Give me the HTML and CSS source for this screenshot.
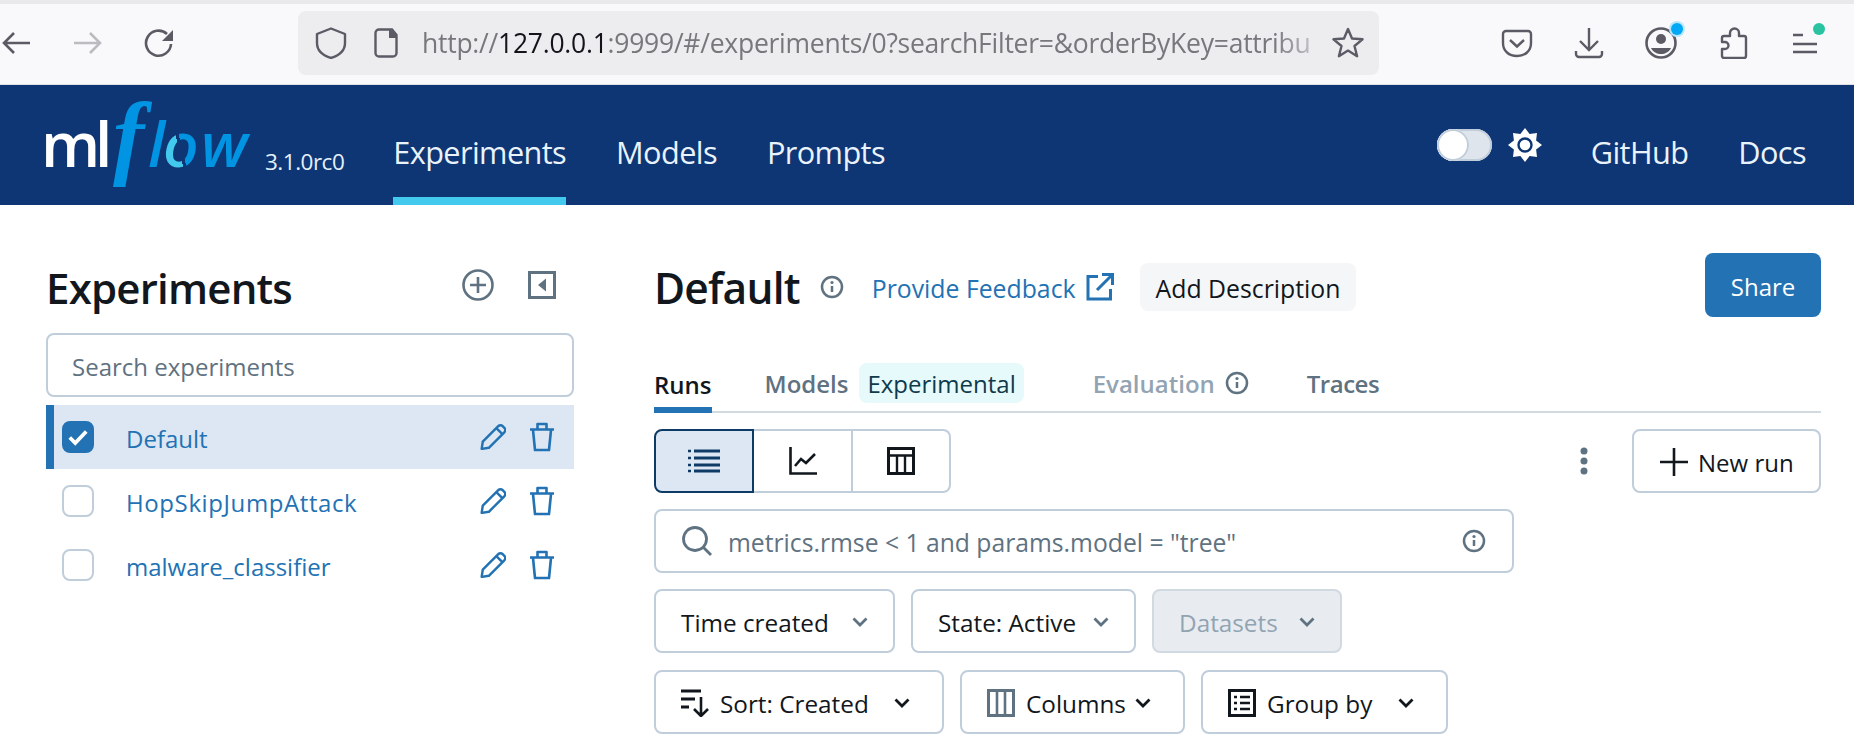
FILE: index.html
```html
<!DOCTYPE html>
<html lang="en">
<head>
  <meta charset="UTF-8">
  <title>MLflow</title>
  <link rel="stylesheet" href="styles.css">
</head>
<body>
  <svg class="sprites" aria-hidden="true">
    <symbol id="pencil" viewBox="1 1 23.500 23.500">
      <path d="M2.500 23.500l1-6.500L17.500 3a2.800 2.800 0 0 1 4 0l1.500 1.500a2.800 2.800 0 0 1 0 4L9 22.500z" fill="none" stroke="currentColor" stroke-width="2.200" stroke-linejoin="round"/>
      <path d="M16 5l5 5" stroke="currentColor" stroke-width="2.200"/>
    </symbol>
    <symbol id="trash" viewBox="0 0 26 30">
      <path d="M1 7.500h24M8.500 7V2h9v5M4 8l2 20h14l2-20" fill="none" stroke="currentColor" stroke-width="2.600" stroke-linejoin="round"/>
    </symbol>
    <symbol id="info" viewBox="0 0 24 24">
      <circle cx="12" cy="12" r="10" fill="none" stroke="currentColor" stroke-width="2.500"/>
      <path d="M12 11v6" stroke="currentColor" stroke-width="2.500"/>
      <circle cx="12" cy="7.500" r="1.600" fill="currentColor"/>
    </symbol>
    <symbol id="chevron" viewBox="0 0 16 10">
      <path d="M1.500 1.500L8 8l6.500-6.500" fill="none" stroke="currentColor" stroke-width="2.800"/>
    </symbol>
  </svg>

  <header class="browser">
    <div class="tab-strip"></div>
    <div class="toolbar">
      <svg class="tool" viewBox="0 0 32 32"><path d="M30 16H4M14 6L4 16l10 10" fill="none" stroke="#5b5b66" stroke-width="2.600"/></svg>
      <svg class="tool" viewBox="0 0 32 32"><path d="M2 16h26M18 6l10 10-10 10" fill="none" stroke="#bcbcc0" stroke-width="2.600"/></svg>
      <svg class="tool" viewBox="0 0 32 32"><path d="M27 17a12.500 12.500 0 1 1-4-10" fill="none" stroke="#5b5b66" stroke-width="2.600"/><path d="M29 3v11H18z" fill="#5b5b66"/></svg>
      <div class="urlbar">
        <svg class="tool-sm" viewBox="0 0 32 32"><path d="M16 1.500L30 7v9c0 8-6 12.500-14 15C8 28.500 2 24 2 16V7z" fill="none" stroke="#5b5b66" stroke-width="2.400" stroke-linejoin="round"/></svg>
        <svg class="tool-doc" viewBox="0 0 24 30"><path d="M18 1.500H5a3.500 3.500 0 0 0-3.500 3.500v20A3.500 3.500 0 0 0 5 28.500h14a3.500 3.500 0 0 0 3.500-3.500V7z" fill="none" stroke="#5b5b66" stroke-width="2.400"/><path d="M15 1v9h8V6z" fill="#5b5b66"/></svg>
        <div class="url">http://<b>127.0.0.1</b>:9999/#/experiments/0?searchFilter=&amp;orderByKey=attribu</div>
        <svg class="tool-sm" viewBox="0 0 32 32"><path d="M16 2l4 9.500 10.500.8-8 6.700 2.600 10.200L16 23.600 6.900 29.200 9.500 19l-8-6.700L12 11.500z" fill="none" stroke="#5b5b66" stroke-width="2.400" stroke-linejoin="round"/></svg>
      </div>
      <div class="browser-actions">
        <svg class="tool" viewBox="0 0 32 32"><path d="M5 4h22a3 3 0 0 1 3 3v9c0 8-6 13-14 13S2 24 2 16V7a3 3 0 0 1 3-3z" fill="none" stroke="#5b5b66" stroke-width="2.400"/><path d="M9 13l7 6.500 7-6.500" fill="none" stroke="#5b5b66" stroke-width="2.400"/></svg>
        <svg class="tool" viewBox="0 0 32 32"><path d="M16 1v22M7 14l9 9 9-9M3 24v3a3 3 0 0 0 3 3h20a3 3 0 0 0 3-3v-3" fill="none" stroke="#5b5b66" stroke-width="2.400"/></svg>
        <div class="tool-wrap">
          <svg class="tool" viewBox="0 0 32 32"><circle cx="16" cy="16" r="14.500" fill="none" stroke="#5b5b66" stroke-width="2.600"/><circle cx="16" cy="12" r="5" fill="#5b5b66"/><path d="M6 21h20c-2 4-6 6-10 6s-8-2-10-6z" fill="#5b5b66"/></svg>
          <span class="badge badge-blue"></span>
        </div>
        <svg class="tool" viewBox="0 0 32 32"><path d="M13 9V6a4.500 4.500 0 0 1 9 0v3h5a2 2 0 0 1 2 2v18a2 2 0 0 1-2 2H7a2 2 0 0 1-2-2v-7h3a3.500 3.500 0 0 0 0-7H5v-4a2 2 0 0 1 2-2z" fill="none" stroke="#5b5b66" stroke-width="2.400" stroke-linejoin="round"/></svg>
        <div class="tool-wrap">
          <svg class="tool" viewBox="0 0 32 32"><path d="M4 8h10M4 17h24M4 25h24" stroke="#5b5b66" stroke-width="2.600"/></svg>
          <span class="badge badge-green"></span>
        </div>
      </div>
    </div>
  </header>

  <nav class="topnav">
    <svg class="logo" viewBox="0 0 212 100" role="img">
      <defs>
        <linearGradient id="ring" gradientUnits="userSpaceOnUse" x1="120" y1="60" x2="153" y2="52">
          <stop offset="0.44" stop-color="#43c9ed"/>
          <stop offset="0.44" stop-color="#0e3574"/>
          <stop offset="0.53" stop-color="#0e3574"/>
          <stop offset="0.53" stop-color="#0194e2"/>
        </linearGradient>
      </defs>
      <text class="logo-flow" y="72"><tspan class="logo-ml" x="-4 50">ml</tspan><tspan class="logo-f" x="68">f</tspan><tspan x="103">l</tspan><tspan x="118" fill="url(#ring)">o</tspan><tspan x="156">w</tspan></text>
    </svg>
    <span class="version">3.1.0rc0</span>
    <div class="navlinks">
      <a class="navlink active">Experiments</a>
      <a class="navlink">Models</a>
      <a class="navlink">Prompts</a>
    </div>
    <div class="navright">
      <span class="toggle"><span class="knob"></span></span>
      <svg class="sun" viewBox="0 0 34 34"><path d="M17 0l4.600 5.900L29 5l-.9 7.400L34 17l-5.900 4.600L29 29l-7.400-.9L17 34l-4.600-5.900L5 29l.9-7.400L0 17l5.900-4.600L5 5l7.400.9z" fill="#fff"/><circle cx="17" cy="17" r="6.500" fill="#fff" stroke="#0e3574" stroke-width="2.400"/></svg>
      <a class="navlink plain">GitHub</a>
      <a class="navlink plain">Docs</a>
    </div>
  </nav>

  <main class="page">
    <aside class="sidebar">
      <div class="side-head">
        <h1>Experiments</h1>
        <svg class="head-plus" viewBox="0 0 32 32"><circle cx="16" cy="16" r="14.500" fill="none" stroke="#5f7281" stroke-width="2.600"/><path d="M16 8v16M8 16h16" stroke="#5f7281" stroke-width="2.600"/></svg>
        <svg class="head-collapse" viewBox="0 0 28 28"><rect x="1.500" y="1.500" width="25" height="25" fill="none" stroke="#5f7281" stroke-width="3"/><path d="M18 7.500v13L10 14z" fill="#5f7281"/></svg>
      </div>
      <div class="side-search">Search experiments</div>
      <ul class="exp-list">
        <li class="exp selected">
          <span class="check on"><svg viewBox="0 0 20 20"><path d="M2.500 10.500l5 5 10-10.500" fill="none" stroke="#fff" stroke-width="3.400"/></svg></span>
          <a class="exp-name">Default</a>
          <svg class="act-pencil"><use href="#pencil"/></svg>
          <svg class="act-trash"><use href="#trash"/></svg>
        </li>
        <li class="exp">
          <span class="check"></span>
          <a class="exp-name wide">HopSkipJumpAttack</a>
          <svg class="act-pencil"><use href="#pencil"/></svg>
          <svg class="act-trash"><use href="#trash"/></svg>
        </li>
        <li class="exp">
          <span class="check"></span>
          <a class="exp-name">malware_classifier</a>
          <svg class="act-pencil"><use href="#pencil"/></svg>
          <svg class="act-trash"><use href="#trash"/></svg>
        </li>
      </ul>
    </aside>

    <section class="content">
      <div class="title-row">
        <h2>Default</h2>
        <svg class="title-info"><use href="#info"/></svg>
        <a class="feedback">Provide Feedback</a>
        <svg class="ext" viewBox="0 0 28 28"><path d="M12 3.500H2v22.500h22.500V16" fill="none" stroke="#2272b4" stroke-width="3"/><path d="M11 17L25 3M16 1.500h10.500V12" fill="none" stroke="#2272b4" stroke-width="3"/></svg>
        <span class="add-desc">Add Description</span>
        <button class="share">Share</button>
      </div>

      <div class="tabs">
        <span class="tab current">Runs</span>
        <span class="tab">Models</span>
        <span class="exp-tag">Experimental</span>
        <span class="tab faded">Evaluation</span>
        <svg class="tab-info"><use href="#info"/></svg>
        <span class="tab last">Traces</span>
      </div>

      <div class="view-row">
        <div class="segments">
          <span class="seg active">
            <svg class="seg-icon" viewBox="0 0 32 24"><path d="M6 2h26M6 9h26M6 16h26M6 22h26" stroke="#0e3a66" stroke-width="3"/><path d="M0 2h3M0 9h3M0 16h3M0 22h3" stroke="#0e3a66" stroke-width="2.500"/></svg>
          </span>
          <span class="seg">
            <svg class="seg-icon tall" viewBox="0 0 28 28"><path d="M1.500 0v26.500H28" fill="none" stroke="#11171c" stroke-width="2.600"/><path d="M6 19l6-7 5 4 9-9" fill="none" stroke="#11171c" stroke-width="2.600"/></svg>
          </span>
          <span class="seg">
            <svg class="seg-icon tall" viewBox="0 0 28 28"><rect x="1.500" y="1.500" width="25" height="25" fill="none" stroke="#11171c" stroke-width="3"/><path d="M1 8.500h26M10 8v19M18 8v19" stroke="#11171c" stroke-width="2.400"/></svg>
          </span>
        </div>
        <svg class="kebab" viewBox="0 0 8 28"><circle cx="4" cy="4" r="3.500" fill="#5f7281"/><circle cx="4" cy="14" r="3.500" fill="#5f7281"/><circle cx="4" cy="24" r="3.500" fill="#5f7281"/></svg>
        <button class="new-run"><svg viewBox="0 0 28 28"><path d="M14 0v28M0 14h28" stroke="#11171c" stroke-width="2.600"/></svg>New run</button>
      </div>

      <div class="run-search">
        <svg class="glass" viewBox="0 0 32 32"><circle cx="14" cy="14" r="11.500" fill="none" stroke="#5f7281" stroke-width="2.800"/><path d="M22.500 22.500L30 30" stroke="#5f7281" stroke-width="2.800"/></svg>
        <span class="run-query">metrics.rmse &lt; 1 and params.model = "tree"</span>
        <svg class="run-info"><use href="#info"/></svg>
      </div>

      <div class="filter-row">
        <button class="pick w-time">Time created<svg class="chev muted"><use href="#chevron"/></svg></button>
        <button class="pick w-state">State: Active<svg class="chev muted"><use href="#chevron"/></svg></button>
        <button class="pick w-data disabled">Datasets<svg class="chev muted"><use href="#chevron"/></svg></button>
      </div>

      <div class="filter-row tools">
        <button class="pick w-sort">
          <svg class="pick-icon" viewBox="0 0 28 28"><path d="M0 2h20M0 10h14M0 18h8" stroke="#11171c" stroke-width="3"/><path d="M20 8v19M13 20l7 7 7-7" fill="none" stroke="#11171c" stroke-width="2.600"/></svg>
          <span class="pick-label">Sort: Created</span><svg class="chev"><use href="#chevron"/></svg>
        </button>
        <button class="pick w-cols">
          <svg class="pick-icon" viewBox="0 0 28 28"><rect x="1.500" y="1.500" width="25" height="25" fill="none" stroke="#5f7281" stroke-width="3"/><path d="M10 1v26M18 1v26" stroke="#5f7281" stroke-width="2.600"/></svg>
          <span class="pick-label">Columns</span><svg class="chev"><use href="#chevron"/></svg>
        </button>
        <button class="pick w-group">
          <svg class="pick-icon" viewBox="0 0 28 28"><rect x="1.500" y="1.500" width="25" height="25" fill="none" stroke="#11171c" stroke-width="3"/><path d="M6 8h3M12 8h10M6 14h3M12 14h10M6 20h3M12 20h10" stroke="#11171c" stroke-width="2.400"/></svg>
          <span class="pick-label">Group by</span><svg class="chev"><use href="#chevron"/></svg>
        </button>
      </div>
    </section>
  </main>
</body>
</html>
```

FILE: styles.css
```css
* {
  box-sizing: border-box;
}
html, body {
  margin: 0;
  height: 742px;
  overflow: hidden;
  background: #fff;
}
body {
  font-family: "Open Sans", "Noto Sans", sans-serif;
  font-size: 24px;
  color: #11171c;
}
button {
  font: inherit;
  color: inherit;
}
.sprites {
  display: none;
}

/* browser chrome */
.tab-strip {
  height: 4px;
  background: #e9e9ec;
}
.toolbar {
  height: 81px;
  display: flex;
  align-items: center;
  gap: 40px;
  padding-bottom: 2px;
  background: #f9f9fb;
  border-bottom: 1px solid #e0e0e4;
}
.tool {
  display: block;
  width: 32px;
  height: 32px;
}
.urlbar {
  width: 1081px;
  height: 64px;
  margin-left: 82px;
  padding: 0 15px 0 17px;
  display: flex;
  align-items: center;
  border-radius: 8px;
  background: #ededf0;
}
.tool-sm {
  flex: none;
  width: 32px;
  height: 32px;
}
.tool-doc {
  flex: none;
  width: 24px;
  height: 30px;
  margin-left: 27px;
}
.url {
  flex: 1;
  margin: 0 13px 0 24px;
  overflow: hidden;
  white-space: nowrap;
  font-size: 26.500px;
  color: #77777c;
  letter-spacing: -0.25px;
  -webkit-mask-image: linear-gradient(to right, #000 95%, rgba(0,0,0,.25));
  mask-image: linear-gradient(to right, #000 95%, rgba(0,0,0,.25));
}
.url b {
  font-weight: 400;
  color: #15141a;
}
.browser-actions {
  display: flex;
  gap: 40px;
  margin-left: 82px;
}
.tool-wrap {
  position: relative;
}
.badge {
  position: absolute;
  width: 12px;
  height: 12px;
  border-radius: 50%;
}
.badge-blue {
  top: -4px;
  right: -6px;
  background: #00a8f5;
  box-shadow: 0 0 0 2px #b9e6fb;
}
.badge-green {
  top: -4px;
  right: -4px;
  background: #2ac3a2;
}

/* top nav */
.topnav {
  height: 120px;
  padding-left: 45px;
  display: flex;
  align-items: center;
  background: #0e3574;
  color: #fff;
}
.logo {
  flex: none;
  width: 212px;
  height: 100px;
  overflow: visible;
}
.logo-flow {
  font-family: "Open Sans", sans-serif;
  font-style: italic;
  font-weight: 600;
  font-size: 62px;
  fill: #0194e2;
}
.logo-ml {
  font-style: normal;
  font-weight: 600;
  fill: #fff;
}
.logo-f {
  font-family: "Liberation Serif", serif;
  font-weight: 700;
  font-size: 94px;
}
.version {
  margin: 32px 0 0 8px;
  font-size: 22.500px;
  letter-spacing: -0.5px;
  color: #e4f0fa;
}
.navlinks {
  height: 100%;
  margin-left: 49px;
  display: flex;
  gap: 50px;
}
.navlink {
  display: flex;
  align-items: center;
  padding-top: 14px;
  font-size: 30.700px;
  letter-spacing: -0.6px;
  color: #eaf3fb;
  border-bottom: 8px solid transparent;
  border-top: 8px solid transparent;
}
.navlink.active {
  border-bottom-color: #43c9ed;
}
.navright {
  margin-left: auto;
  margin-right: 48px;
  display: flex;
  align-items: center;
}
.toggle {
  display: block;
  width: 55px;
  height: 32px;
  border-radius: 16px;
  background: #dfe5ec;
  box-shadow: inset 0 0 0 2px #c0cddb;
}
.knob {
  display: block;
  width: 32px;
  height: 32px;
  border-radius: 50%;
  background: #fff;
  box-shadow: inset 0 0 0 2px #c0cddb;
}
.sun {
  width: 34px;
  height: 34px;
  margin: 0 49px 0 16px;
}
.navlink.plain + .navlink.plain {
  margin-left: 50px;
}

/* page */
.page {
  display: flex;
  padding: 48px 0 0 46px;
}
.sidebar {
  flex: none;
  width: 528px;
}
.side-head {
  height: 64px;
  margin-bottom: 16px;
  display: flex;
  align-items: center;
}
h1, h2 {
  margin: 0;
  padding-top: 4px;
  font-size: 42px;
  font-weight: 600;
  letter-spacing: -0.8px;
}
h2 {
  font-size: 42.500px;
}
.head-plus {
  width: 32px;
  height: 32px;
  margin-left: auto;
}
.head-collapse {
  width: 28px;
  height: 28px;
  margin: 0 18px 0 34px;
}
.side-search {
  height: 64px;
  margin-bottom: 8px;
  padding: 2px 0 0 24px;
  display: flex;
  align-items: center;
  border: 2px solid #c0cddb;
  border-radius: 8px;
  color: #5f7281;
}
.exp-list {
  margin: 0;
  padding: 0;
  list-style: none;
}
.exp {
  height: 64px;
  padding: 0 19px 0 16px;
  display: flex;
  align-items: center;
}
.exp.selected {
  padding-left: 8px;
  border-left: 8px solid #2272b4;
  background: #dce7f3;
}
.check {
  flex: none;
  width: 32px;
  height: 32px;
  display: flex;
  align-items: center;
  justify-content: center;
  border: 2px solid #c0cddb;
  border-radius: 8px;
  background: #fff;
}
.check.on {
  border-color: #2272b4;
  background: #2272b4;
}
.check svg {
  width: 22px;
  height: 22px;
}
.exp-name {
  margin-left: 32px;
  padding-top: 2px;
  color: #2272b4;
}
.exp-name.wide {
  letter-spacing: 0.6px;
}
.act-pencil {
  width: 26px;
  height: 26px;
  margin-left: auto;
  color: #2272b4;
}
.act-trash {
  width: 26px;
  height: 30px;
  margin-left: 23px;
  color: #2272b4;
}

/* content */
.content {
  width: 1167px;
  margin-left: 80px;
}
.title-row {
  height: 64px;
  display: flex;
  align-items: center;
}
.title-info {
  width: 24px;
  height: 24px;
  margin: 4px 28px 0 20px;
  color: #5f7281;
}
.feedback {
  padding-top: 5px;
  font-size: 24.800px;
  color: #2272b4;
}
.ext {
  width: 28px;
  height: 28px;
  margin: 4px 0 0 10px;
}
.add-desc {
  height: 48px;
  margin: 4px 0 0 26px;
  padding: 2px 16px 0;
  display: flex;
  align-items: center;
  font-size: 24.800px;
  border-radius: 8px;
  background: #f5f6f8;
}
.share {
  width: 116px;
  height: 64px;
  margin-left: auto;
  padding-top: 3px;
  border: 0;
  border-radius: 8px;
  background: #2272b4;
  color: #fff;
}
.tabs {
  height: 52px;
  margin-top: 44px;
  padding-bottom: 6px;
  display: flex;
  align-items: center;
  font-size: 24px;
  border-bottom: 2px solid #d1d9e1;
}
.tab {
  font-weight: 600;
  color: #5f7281;
}
.tab.current {
  align-self: stretch;
  margin: 0 53px -8px 0;
  display: flex;
  align-items: center;
  color: #11171c;
  border-bottom: 6px solid #2272b4;
}
.tab.faded {
  margin-left: 69px;
  color: #92a4b3;
}
.tab.last {
  margin-left: 58px;
  letter-spacing: -0.5px;
}
.exp-tag {
  height: 40px;
  margin-left: 11px;
  padding: 0 8px;
  display: flex;
  align-items: center;
  border-radius: 8px;
  background: #e6f9fb;
  color: #0e3a4a;
}
.tab-info {
  width: 24px;
  height: 24px;
  margin-left: 10px;
  color: #5f7281;
}
.view-row {
  height: 64px;
  margin-top: 16px;
  display: flex;
  align-items: center;
}
.segments {
  display: flex;
  height: 64px;
}
.seg {
  width: 99px;
  display: flex;
  align-items: center;
  justify-content: center;
  border: 2px solid #c0cddb;
  border-left: 0;
}
.seg:last-child {
  width: 98px;
  border-radius: 0 8px 8px 0;
}
.seg.active {
  width: 100px;
  border: 2px solid #0e3a66;
  border-radius: 8px 0 0 8px;
  background: #dce7f3;
}
.seg-icon {
  width: 32px;
  height: 24px;
}
.seg-icon.tall {
  width: 28px;
  height: 28px;
}
.kebab {
  width: 8px;
  height: 28px;
  margin-left: auto;
}
.new-run {
  width: 189px;
  height: 64px;
  margin-left: 44px;
  padding: 2px 0 0 26px;
  display: flex;
  align-items: center;
  gap: 10px;
  border: 2px solid #c0cddb;
  border-radius: 8px;
  background: #fff;
}
.new-run svg {
  width: 28px;
  height: 28px;
}
.run-search {
  width: 860px;
  height: 64px;
  margin-top: 16px;
  padding: 0 26px 0 25px;
  display: flex;
  align-items: center;
  border: 2px solid #c0cddb;
  border-radius: 8px;
}
.glass {
  width: 32px;
  height: 32px;
}
.run-query {
  margin-left: 15px;
  padding-top: 2px;
  font-size: 24.700px;
  color: #5f7281;
}
.run-info {
  width: 24px;
  height: 24px;
  margin-left: auto;
  color: #5f7281;
}
.filter-row {
  margin-top: 16px;
  display: flex;
  gap: 16px;
}
.filter-row.tools {
  margin-top: 17px;
}
.pick {
  height: 64px;
  padding: 2px 25px 0;
  display: flex;
  align-items: center;
  font-size: 24.300px;
  border: 2px solid #c0cddb;
  border-radius: 8px;
  background: #fff;
}
.tools .pick {
  padding-right: 32px;
}
.pick.disabled {
  background: #e8ecf0;
  border-color: #d1d9e1;
  color: #92a4b3;
}
.pick-icon {
  flex: none;
  width: 28px;
  height: 28px;
  margin-right: 11px;
}
.chev {
  flex: none;
  width: 16px;
  height: 10px;
  margin-left: auto;
}
.chev.muted {
  color: #5f7281;
}
.w-time { width: 241px; }
.w-state { width: 225px; }
.w-data { width: 190px; }
.w-sort { width: 290px; }
.w-cols { width: 225px; }
.w-group { width: 247px; }
```
